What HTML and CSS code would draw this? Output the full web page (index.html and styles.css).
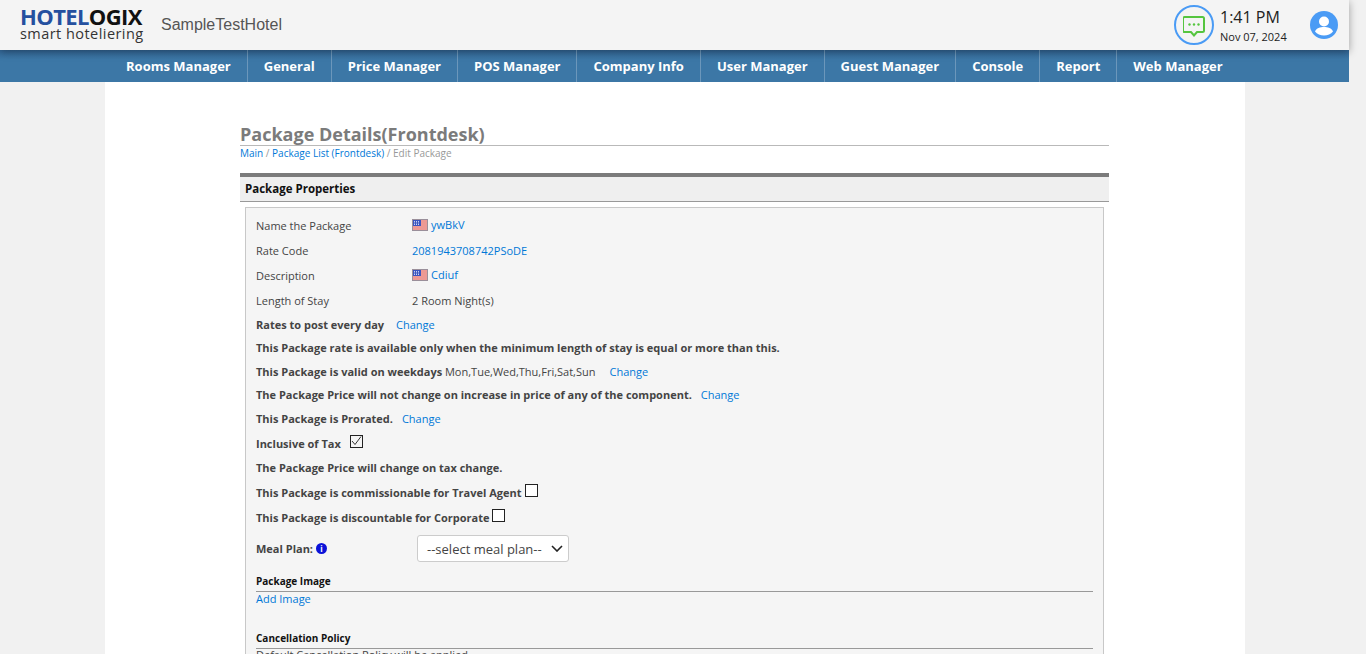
FILE: index.html
```html
<!DOCTYPE html>
<html lang="en">
<head>
    <meta charset="UTF-8">
    <title>Package Details</title>
    <link rel="stylesheet" href="styles.css">
</head>
<body>

<div class="shell">
    <header class="topbar">
        <div class="logo">
            <div class="logo-name"><span class="logo-blue">HOTEL</span>OGIX</div>
            <div class="logo-tag">smart hoteliering</div>
        </div>
        <div class="hotel-name">SampleTestHotel</div>
        <div class="topbar-right">
            <div class="chat-ring">
                <svg width="22" height="21" viewBox="0 0 22 21" fill="none" stroke="#55c53f" stroke-width="2">
                    <path d="M2.500 1h17a1.500 1.500 0 0 1 1.500 1.500v12a1.500 1.500 0 0 1-1.500 1.500h-5.500l-3 3.500-3-3.500h-6.500a1.500 1.500 0 0 1-1.500-1.500v-12a1.500 1.500 0 0 1 1.500-1.500z"/>
                    <circle cx="6.500" cy="8.500" r="1.200" fill="#55c53f" stroke="none"/>
                    <circle cx="11" cy="8.500" r="1.200" fill="#55c53f" stroke="none"/>
                    <circle cx="15.500" cy="8.500" r="1.200" fill="#55c53f" stroke="none"/>
                </svg>
            </div>
            <div class="clock">
                <div class="clock-time">1:41 PM</div>
                <div class="clock-date">Nov 07, 2024</div>
            </div>
            <svg class="user-icon" width="28" height="28" viewBox="0 0 28 28">
                <circle cx="14" cy="14" r="14" fill="#4a9bf5"/>
                <circle cx="14" cy="10.500" r="5" fill="#fff"/>
                <path d="M5 20.500c1.500-3.500 5-4.500 9-4.500s7.500 1 9 4.500c-2 2.500-5.500 4-9 4s-7-1.500-9-4z" fill="#fff"/>
            </svg>
        </div>
    </header>
    <nav class="menu">
        <a href="#">Rooms Manager</a>
        <a href="#">General</a>
        <a href="#">Price Manager</a>
        <a href="#">POS Manager</a>
        <a href="#">Company Info</a>
        <a href="#">User Manager</a>
        <a href="#">Guest Manager</a>
        <a href="#">Console</a>
        <a href="#">Report</a>
        <a href="#">Web Manager</a>
    </nav>

    <main class="page">
        <h1>Package Details(Frontdesk)</h1>
        <div class="crumbs"><a href="#">Main</a> / <a href="#">Package List (Frontdesk)</a> / Edit Package</div>

        <h2 class="section-head">Package Properties</h2>
        <section class="box">
            <div class="fields">
                <div class="field"><span class="field-label">Name the Package</span><span class="flag-value"><svg class="flag" viewBox="0 0 16 12"><use href="#us"/></svg><a href="#">ywBkV</a></span></div>
                <div class="field"><span class="field-label">Rate Code</span><a href="#">2081943708742PSoDE</a></div>
                <div class="field"><span class="field-label">Description</span><span class="flag-value"><svg class="flag" viewBox="0 0 16 12"><use href="#us"/></svg><a href="#">Cdiuf</a></span></div>
                <div class="field"><span class="field-label">Length of Stay</span><span>2 Room Night(s)</span></div>
            </div>

            <div class="line"><b>Rates to post every day</b><a class="change first" href="#">Change</a></div>
            <div class="line"><b>This Package rate is available only when the minimum length of stay is equal or more than this.</b></div>
            <div class="line"><b>This Package is valid on weekdays</b> Mon,Tue,Wed,Thu,Fri,Sat,Sun<a class="change wide" href="#">Change</a></div>
            <div class="line"><b>The Package Price will not change on increase in price of any of the component.</b><a class="change" href="#">Change</a></div>
            <div class="line"><b>This Package is Prorated.</b><a class="change" href="#">Change</a></div>
            <div class="line line-tax"><b>Inclusive of Tax</b><span class="check checked"><svg width="11" height="10" viewBox="0 0 11 10" fill="none" stroke="#333" stroke-width="1"><path d="M1 5l3 3.500 6-8"/></svg></span></div>
            <div class="line"><b>The Package Price will change on tax change.</b></div>
            <div class="line line-check"><b>This Package is commissionable for Travel Agent</b><span class="check"></span></div>
            <div class="line line-check"><b>This Package is discountable for Corporate</b><span class="check"></span></div>
            <div class="meal">
                <span class="meal-label"><b>Meal Plan:</b><span class="info">i</span></span>
                <div class="select-box">--select meal plan--
                    <svg width="12" height="7" viewBox="0 0 12 7" fill="none" stroke="#222" stroke-width="1.600"><path d="M1 1l5 5 5-5"/></svg>
                </div>
            </div>
            <h3 class="sub-head image-head">Package Image</h3>
            <a class="add-image" href="#">Add Image</a>
            <h3 class="sub-head cancel-head">Cancellation Policy</h3>
            <div class="policy">Default Cancellation Policy will be applied.</div>
        </section>
    </main>
</div>

<svg width="0" height="0" class="defs">
    <defs>
        <g id="us">
            <rect x=".5" y=".5" width="15" height="11" fill="#f6eeee" stroke="#9a8f9a"/>
            <path d="M1 2h14M1 4h14M1 6h14M1 8h14M1 10h14" stroke="#e2443a" stroke-width="1"/>
            <rect x="1" y="1" width="8" height="6" fill="#3a55c0"/>
            <path d="M2 2.500h6M2 4h6M2 5.500h6" stroke="#eef0fb" stroke-width=".8" stroke-dasharray="1 1"/>
        </g>
    </defs>
</svg>

</body>
</html>
```

FILE: styles.css
```css
html, body {
    margin: 0;
    height: 654px;
    overflow: hidden;
}
body {
    font-family: "Open Sans", sans-serif;
    font-size: 11px;
    color: #444;
    background-color: #f1f1f1;
}
a {
    color: #0078d7;
    text-decoration: none;
}
.defs {
    position: absolute;
}
.shell {
    width: 1349px;
}
.topbar {
    display: flex;
    align-items: center;
    height: 50px;
    background-color: #f4f4f4;
    position: relative;
    z-index: 1;
    box-shadow: 0 2px 8px rgba(0, 0, 0, 0.35);
}
.logo {
    margin: -1px 0 0 20px;
    width: 141px;
}
.logo-name {
    font-size: 22px;
    line-height: 19px;
    font-weight: bold;
    letter-spacing: -0.6px;
    color: #111;
}
.logo-blue {
    color: #25509f;
}
.logo-tag {
    font-size: 14.500px;
    line-height: 16px;
    letter-spacing: 0.45px;
    color: #333;
    white-space: nowrap;
}
.hotel-name {
    font-family: "Liberation Sans", sans-serif;
    font-size: 16px;
    color: #555;
}
.topbar-right {
    display: flex;
    align-items: center;
    margin-left: auto;
}
.chat-ring {
    width: 36px;
    height: 36px;
    border: 2px solid #4a9bf5;
    border-radius: 50%;
    display: flex;
    align-items: center;
    justify-content: center;
}
.chat-ring svg {
    margin-top: 3px;
}
.clock {
    margin-left: 6px;
    color: #222;
    width: 90px;
}
.clock-time {
    font-size: 16px;
    line-height: 20px;
    margin-top: 1px;
}
.clock-date {
    font-size: 11px;
    line-height: 15px;
    margin-top: 2px;
}
.user-icon {
    margin-right: 11px;
}
.menu {
    display: flex;
    height: 32px;
    padding-left: 110px;
    background: linear-gradient(#34699a, #3c77a6 30%);
}
.menu a {
    color: #fff;
    font-size: 13px;
    font-weight: bold;
    line-height: 33px;
    padding: 0 16px;
    border-right: 1px solid #6c97bb;
}
.menu a:last-child {
    border-right: 0;
}
.page {
    width: 869px;
    height: 572px;
    margin-left: 105px;
    padding: 0 136px 0 135px;
    background-color: #fff;
    overflow: hidden;
}
h1 {
    margin: 41px 0 0;
    font-size: 18px;
    line-height: 22px;
    color: #7b7b7b;
    border-bottom: 1px solid #b9b9b9;
}
.crumbs {
    font-size: 10px;
    line-height: 14px;
    color: #999;
}
.section-head {
    margin: 13px 0 5px;
    height: 24px;
    font-size: 11.500px;
    line-height: 24px;
    color: #111;
    padding-left: 5px;
    background-color: #efefef;
    border-top: 4px solid #7b7b7b;
    border-bottom: 1px solid #999;
}
.box {
    margin: 0 5px;
    padding: 5px 10px;
    height: 600px;
    background-color: #f5f5f5;
    border: 1px solid #c8c8c8;
}
.fields {
    margin-bottom: -0.5px;
}
.field {
    display: flex;
    height: 25px;
    line-height: 25px;
}
.field-label {
    width: 156px;
}
.flag-value {
    display: flex;
    align-items: center;
    margin-top: -1px;
    height: 25px;
}
.flag {
    width: 16px;
    height: 12px;
    margin-right: 3px;
}
.line {
    height: 23.500px;
    line-height: 23.500px;
    color: #444;
}
.change {
    margin-left: 9px;
}
.change.first {
    margin-left: 12px;
}
.change.wide {
    margin-left: 14px;
}
.line-tax {
    height: 25px;
    line-height: 25px;
    margin-top: 1px;
    display: flex;
    align-items: center;
}
.line-check {
    height: 25px;
    line-height: 25px;
    display: flex;
    align-items: center;
}
.check {
    display: inline-flex;
    align-items: center;
    justify-content: center;
    width: 11px;
    height: 11px;
    margin: -3px 0 0 3px;
    border: 1px solid #222;
    background-color: #fff;
}
.check.checked {
    margin: -5px 0 0 9px;
    background-color: transparent;
}
.meal {
    display: flex;
    align-items: center;
    height: 28px;
    margin-top: 5px;
}
.meal-label {
    display: flex;
    align-items: center;
    width: 161px;
}
.info {
    width: 11px;
    height: 11px;
    margin-left: 3px;
    border-radius: 50%;
    background-color: #0b12d8;
    color: #fff;
    font-size: 8px;
    font-weight: bold;
    line-height: 11px;
    text-align: center;
}
.select-box {
    display: flex;
    align-items: center;
    justify-content: space-between;
    box-sizing: border-box;
    width: 152px;
    height: 27px;
    padding: 0 5px 0 9px;
    font-size: 13px;
    color: #444;
    background-color: #fff;
    border: 1px solid #ccc;
    border-radius: 3px;
}
.sub-head {
    margin: 0;
    padding-bottom: 1px;
    font-size: 10px;
    line-height: 17px;
    color: #111;
    border-bottom: 1px solid #999;
}
.image-head {
    margin-top: 10px;
}
.add-image {
    display: block;
    margin-top: -1px;
}
.cancel-head {
    margin-top: 24px;
}
.policy {
    margin-top: -2px;
}
```
